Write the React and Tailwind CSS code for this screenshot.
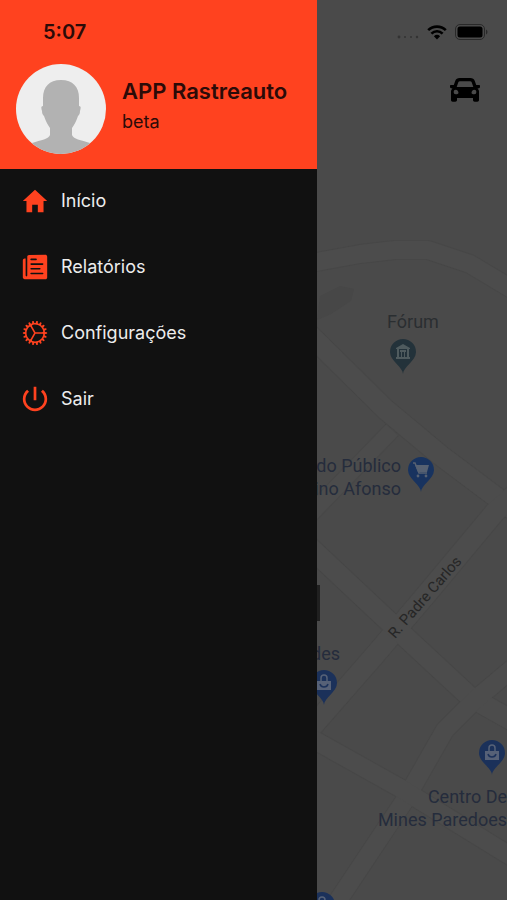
import { IoIosCog, IoIosPaper, IoMdHome, IoMdPower } from 'react-icons/io';

const MENU_ITEMS = [
  { label: 'Início', icon: IoMdHome },
  { label: 'Relatórios', icon: IoIosPaper },
  { label: 'Configurações', icon: IoIosCog },
  { label: 'Sair', icon: IoMdPower },
];

const ROADS = [
  { d: 'M300 265L360 254L395 250L428 250L470 264L520 294', width: 18 },
  { d: 'M392 430L305 520', width: 16 },
  { d: 'M300 325L385 409L440 455L520 515', width: 20 },
  { d: 'M520 490L495 512L425 596L375 655L305 735', width: 20 },
  { d: 'M300 538L400 632L470 697L520 725', width: 20 },
  { d: 'M520 662L475 700L445 730L405 800L335 905', width: 18 },
  { d: 'M300 732L400 788L520 862', width: 18 },
];

const PIN_SHAPE = 'M13 35C13 28 0 22 0 13a13 13 0 0 1 26 0c0 9-13 15-13 22z';

function BankGlyph() {
  return (
    <g fill="#4f5b5e">
      <path d="M6 9l7-4 7 4v1H6zM6 18h14v2H6z" />
      <path d="M7 10h2v8H7zM10 11h6v2h-1v5h-1v-5h-2v5h-1v-5h-1zM17 10h2v8h-2z" />
    </g>
  );
}

function CartGlyph() {
  return (
    <g>
      <path d="M5 6h2l4 10h8" fill="none" stroke="#566172" strokeWidth="1.5" />
      <path d="M7 8h14l-2 7h-9z" fill="#566172" />
      <circle cx="10" cy="19" r="1.4" fill="#566172" />
      <circle cx="18" cy="19" r="1.4" fill="#566172" />
    </g>
  );
}

function BagGlyph() {
  return (
    <g>
      <path d="M6 11h14v9H6z" fill="#566177" />
      <path d="M10 12V8a3 3 0 0 1 6 0v4" fill="none" stroke="#566177" strokeWidth="1.5" />
      <path d="M9 14c1 4 7 4 8 0" fill="none" stroke="#1b315a" strokeWidth="1.5" />
    </g>
  );
}

function Pin({ className, children }) {
  return (
    <svg viewBox="0 0 26 36" className={`absolute h-9 w-[26px] ${className}`} aria-hidden="true">
      <path d={PIN_SHAPE} fill="currentColor" />
      {children}
    </svg>
  );
}

function MapView() {
  return (
    <div className="absolute inset-0 overflow-hidden bg-[#4a4a4a] font-['Roboto',sans-serif] text-lg leading-[23px] text-[#252c3c]">
      <svg
        viewBox="0 0 507 900"
        preserveAspectRatio="xMidYMid slice"
        className="h-full w-full"
        fill="none"
        strokeLinejoin="round"
        aria-hidden="true"
      >
        <path d="M320 296l20-10 14 3-3 12-20 13-14 6z" fill="#474747" />
        {ROADS.map((road) => (
          <path key={road.d} d={road.d} stroke="#474747" strokeWidth={road.width + 2} />
        ))}
        {ROADS.map((road) => (
          <path key={road.d} d={road.d} stroke="#4c4c4c" strokeWidth={road.width} />
        ))}
      </svg>

      {/* Places */}
      <p className="absolute top-[310px] left-[387px] text-[#2a2e31]">Fórum</p>
      <Pin className="top-[339px] left-[390px] text-[#23323a]">
        <BankGlyph />
      </Pin>

      <p className="absolute top-[454px] right-[106px] text-right whitespace-nowrap">
        do Público
        <br />
        ino Afonso
      </p>
      <Pin className="top-[457px] left-[408px] text-[#18335f]">
        <CartGlyph />
      </Pin>

      <p className="absolute top-[642px] left-[311px]">des</p>
      <Pin className="top-[670px] left-[311px] text-[#1b315a]">
        <BagGlyph />
      </Pin>

      <Pin className="top-[740px] left-[479px] text-[#1b315a]">
        <BagGlyph />
      </Pin>
      <p className="absolute top-[785px] right-0 text-right whitespace-nowrap">
        Centro De
        <br />
        Mines Paredoes
      </p>
      <Pin className="top-[892px] left-[309px] text-[#1b315a]">
        <BagGlyph />
      </Pin>

      <p className="absolute top-[586px] left-[374px] -rotate-[49deg] text-[15px] whitespace-nowrap text-[#262626]">
        R. Padre Carlos
      </p>

      {/* Vehicle callout, mostly behind the drawer */}
      <div className="absolute top-[585px] left-[220px] h-9 w-[100px] bg-[#202020]" />
    </div>
  );
}

function StatusIcons() {
  return (
    <div className="flex items-center gap-2">
      <svg viewBox="0 0 24 6" className="mt-2 h-[6px] w-6" fill="#333333" aria-hidden="true">
        <circle cx="4" cy="4" r="1.4" />
        <circle cx="10" cy="4" r="1" />
        <circle cx="16" cy="4" r="1" />
        <circle cx="22" cy="4" r="1.2" />
      </svg>
      <svg viewBox="0 0 20 15" className="h-[15px] w-5" aria-hidden="true">
        <path d="M1.2 5.2a12.5 12.5 0 0 1 17.600 0M4.400 8.600a8 8 0 0 1 11.200 0" fill="none" stroke="#000" strokeWidth="2.6" />
        <path d="M6.9 11.2a4.500 4.500 0 0 1 6.200 0L10 14.600z" />
      </svg>
      <svg viewBox="0 0 33 16" className="h-4 w-[33px]" aria-hidden="true">
        <rect x="0.5" y="0.5" width="29" height="15" rx="4.5" fill="none" stroke="#292929" />
        <rect x="2.5" y="2.5" width="25" height="11" rx="2.5" />
        <path d="M31 5.500c2 1 2 4 0 5z" fill="#292929" />
      </svg>
    </div>
  );
}

function CarIcon() {
  return (
    <svg viewBox="0 0 30 24" className="h-6 w-[30px]" fill="currentColor" aria-hidden="true">
      <path
        fillRule="evenodd"
        d="M9.500 0h11c2 0 3.500 1 4.200 2.800L26.200 7h2.800c.6 0 1 .4 1 1v1c0 .7-.4 1.100-1 1.200l-1.500.2c1 .8 1.500 1.900 1.500 3.200V22c0 1-.7 1.700-1.700 1.700h-2.600c-1 0-1.700-.7-1.700-1.700v-2H7v2c0 1-.7 1.700-1.700 1.700H2.700C1.700 23.700 1 23 1 22v-8.400c0-1.300.5-2.400 1.500-3.200L1 10.200C.4 10.100 0 9.700 0 9V8c0-.6.4-1 1-1h2.800l1.500-4.200C6 1 7.500 0 9.500 0zM10 3.200c-.9 0-1.500.4-1.800 1.200L6.700 9h16.600l-1.500-4.600c-.3-.8-.9-1.200-1.800-1.200zM5.800 11.800a2.200 2.200 0 1 0 0 4.400c1.200 0 2.700-.2 2.700-1.200 0-1.600-1.200-3.200-2.700-3.200zM24.200 11.800c-1.500 0-2.700 1.600-2.700 3.200 0 1 1.500 1.200 2.700 1.200a2.200 2.200 0 1 0 0-4.400z"
      />
    </svg>
  );
}

function Avatar() {
  return (
    <svg viewBox="0 0 90 90" className="h-[90px] w-[90px] shrink-0 rounded-full bg-[#eeeeee]" aria-hidden="true">
      <path
        d="M45 16C33 16 27 23 27 34v8c-2 0-2 2-1 5 0 3 1 4 2 5 2 6 4 9 6 12v7c-1 4-9 5-18 8v15h58V79c-9-3-17-4-18-8v-7c2-3 4-6 6-12 1-1 2-2 2-5 1-3 1-5-1-5v-8c0-11-6-18-18-18z"
        fill="#b2b2b2"
      />
    </svg>
  );
}

function Drawer() {
  return (
    <aside className="absolute inset-y-0 left-0 w-5/8 bg-[#111111]">
      <header className="bg-[#ff421f] text-[#2c0b08]">
        <div className="flex h-16 items-center pl-[43px] text-xl font-semibold">5:07</div>
        <div className="flex gap-4 px-4 pb-[15px]">
          <Avatar />
          <div className="min-w-0 pt-[11px] whitespace-nowrap">
            <h1 className="text-[22px] leading-8 font-semibold">APP Rastreauto</h1>
            <p className="text-lg leading-[30px]">beta</p>
          </div>
        </div>
      </header>
      <nav>
        <ul>
          {MENU_ITEMS.map(({ label, icon: Icon }) => (
            <li key={label}>
              <a href="#" className="flex h-[66px] items-center gap-[11px] px-5 pb-[2px] text-lg text-[#ededed]">
                <Icon size={30} className="text-[#ff421f]" />
                {label}
              </a>
            </li>
          ))}
        </ul>
      </nav>
    </aside>
  );
}

export default function App() {
  return (
    <div className="relative h-screen overflow-hidden font-['Inter',sans-serif]">
      <MapView />
      <div className="relative flex flex-col items-end gap-[14px]">
        <div className="flex h-16 items-center pr-[19px]">
          <StatusIcons />
        </div>
        <button type="button" aria-label="Veículos" className="mr-[27px] text-black">
          <CarIcon />
        </button>
      </div>
      <Drawer />
    </div>
  );
}
